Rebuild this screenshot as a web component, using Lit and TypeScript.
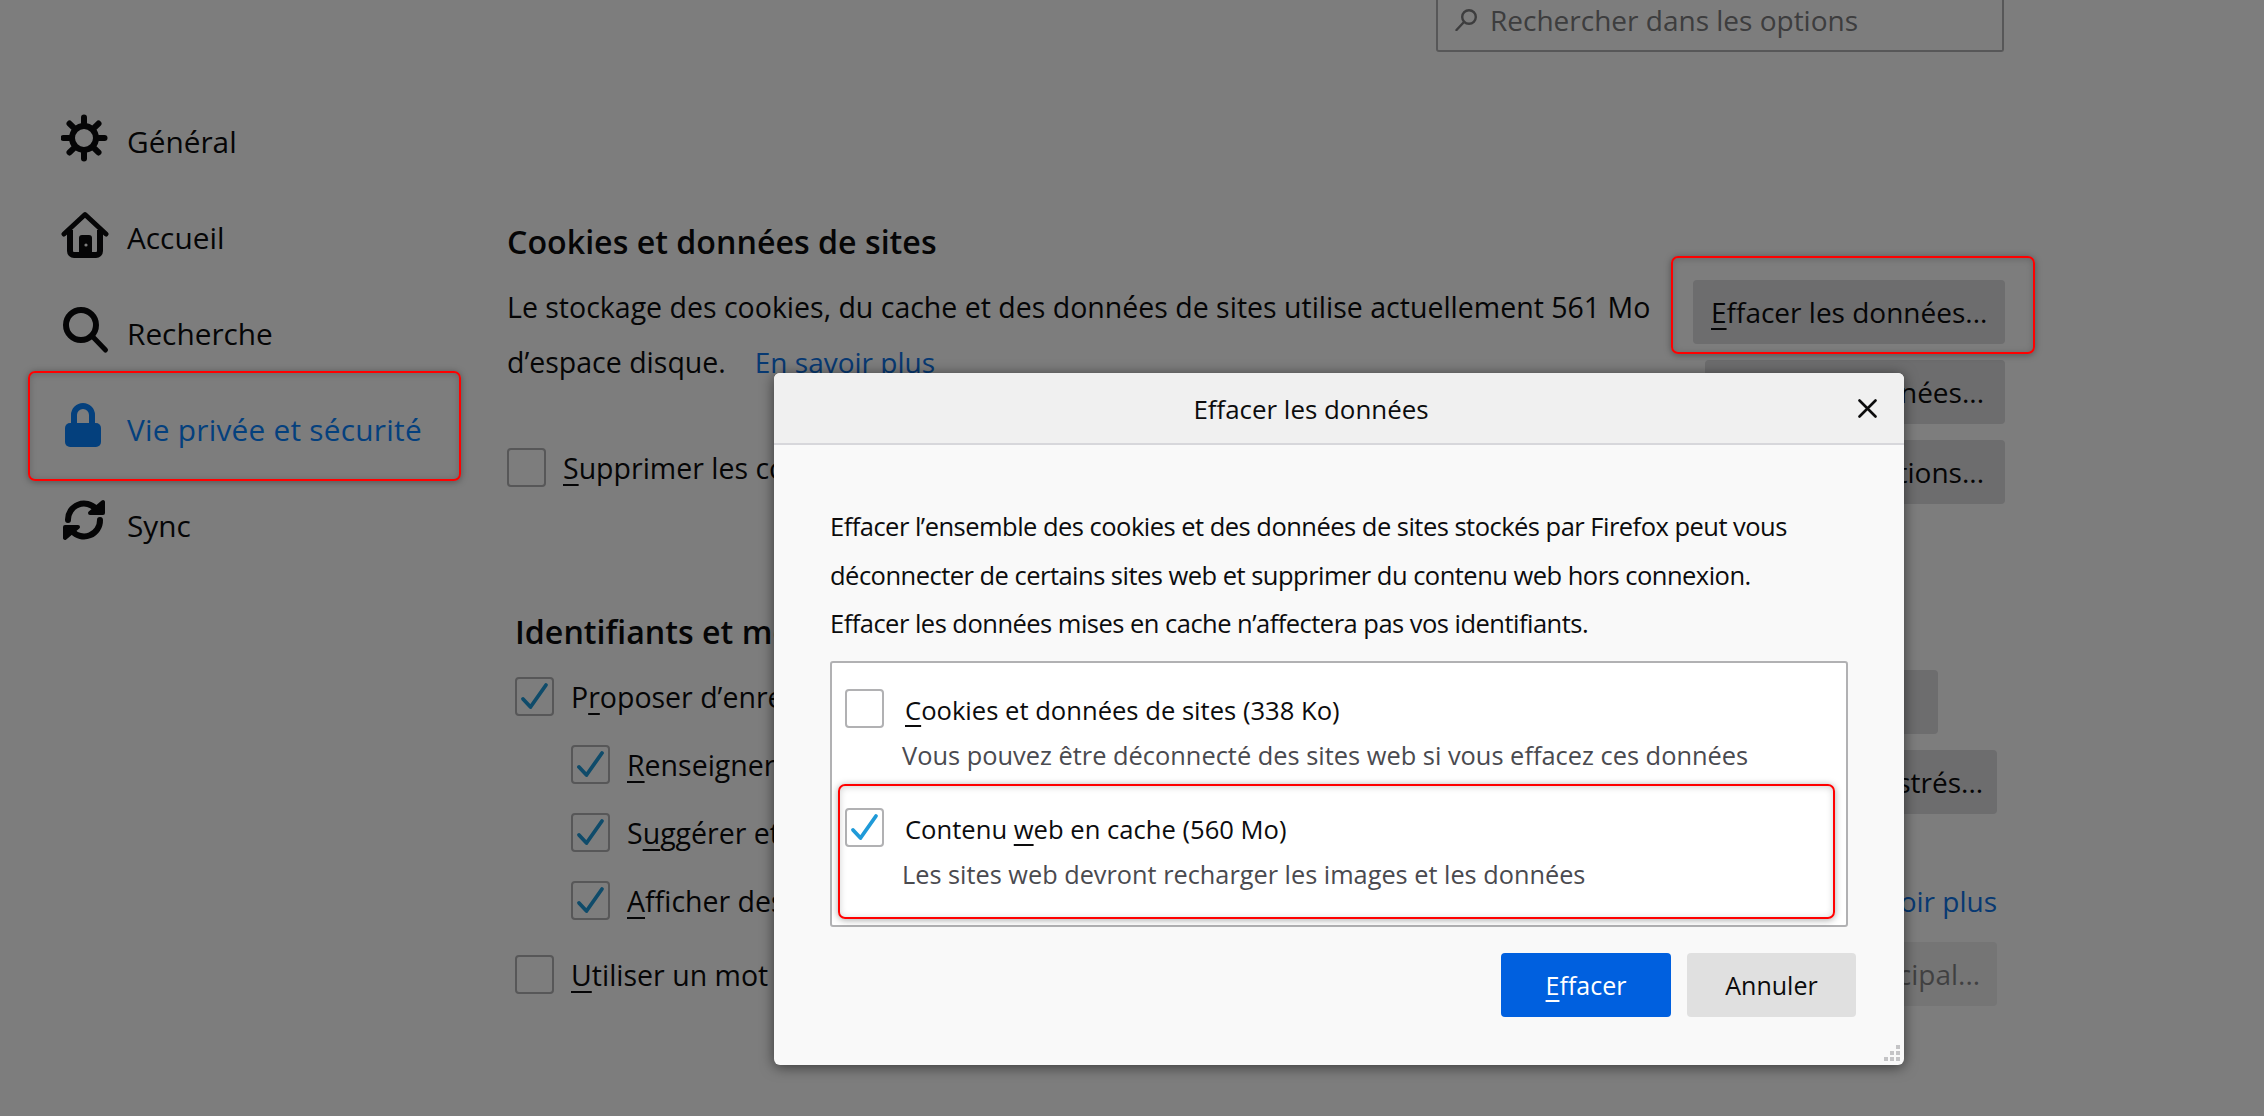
import { LitElement, html, css, svg } from "lit";
import { customElement } from "lit/decorators.js";

const gearSpokes = [0, 45, 90, 135, 180, 225, 270, 315];
const icons = {
  gear: svg`<circle cx="23" cy="24" r="12" fill="none" stroke="currentColor" stroke-width="6"/>
    ${gearSpokes.map((a) => svg`<line x1="23" y1="9" x2="23" y2="3.5" transform="rotate(${a} 23 24)" stroke="currentColor" stroke-width="6" stroke-linecap="round"/>`)}`,
  home: svg`<path d="M3 24 L24 4.5 L45 24" fill="none" stroke="currentColor" stroke-width="5" stroke-linecap="round" stroke-linejoin="round"/>
    <path d="M9 20 V41 a4 4 0 0 0 4 4 H35 a4 4 0 0 0 4-4 V20" fill="none" stroke="currentColor" stroke-width="6"/>
    <path d="M18 46 V28 a3 3 0 0 1 3-3 h7 a3 3 0 0 1 3 3 V46 z" fill="currentColor"/>
    <circle cx="25" cy="35" r="1.6" fill="#fff"/>`,
  search: svg`<circle cx="20" cy="19" r="15" fill="none" stroke="currentColor" stroke-width="6"/>
    <line x1="32" y1="31" x2="44.5" y2="44" stroke="currentColor" stroke-width="5" stroke-linecap="round"/>`,
  lock: svg`<rect x="4" y="21" width="36" height="24" rx="5" fill="currentColor"/>
    <path d="M13 24 V13 a9 9 0 0 1 18 0 V24" fill="none" stroke="currentColor" stroke-width="6"/>`,
  sync: svg`<path d="M7 22 A16 16 0 0 1 35 11" fill="none" stroke="currentColor" stroke-width="6" stroke-linecap="round"/>
    <path d="M42 4 V15 H29 z" fill="currentColor" stroke="currentColor" stroke-width="4" stroke-linejoin="round"/>
    <path d="M39 22 A16 16 0 0 1 11 33" fill="none" stroke="currentColor" stroke-width="6" stroke-linecap="round"/>
    <path d="M4 40 V29 H17 z" fill="currentColor" stroke="currentColor" stroke-width="4" stroke-linejoin="round"/>`,
};

const navItems = [
  { icon: icons.gear, label: "Général" },
  { icon: icons.home, label: "Accueil" },
  { icon: icons.search, label: "Recherche" },
  { icon: icons.lock, label: "Vie privée et sécurité", active: true },
  { icon: icons.sync, label: "Sync" },
];

const box = (checked: boolean) => html`<div class="cb">
  ${checked
    ? html`<svg viewBox="0 0 39 39" width="39" height="39"><path d="M8 22 L15.5 30 L31 8" fill="none" stroke="currentColor" stroke-width="3.8" stroke-linecap="round" stroke-linejoin="round"/></svg>`
    : ""}
</div>`;

@customElement("app-root")
export class AppRoot extends LitElement {
  static styles = css`
    :host {
      display: block;
      position: relative;
      width: 2264px;
      height: 1116px;
      overflow: hidden;
      background: #fff;
      color: #0c0c0d;
      font-family: "Open Sans", "Noto Sans", sans-serif;
      font-size: 28.5px;
    }
    * { box-sizing: border-box; }
    u {
      text-decoration-thickness: 2px;
      text-underline-offset: 5px;
      text-decoration-skip-ink: none;
    }

    .top { display: flex; justify-content: flex-end; padding-right: 260px; }
    .search {
      display: flex;
      align-items: flex-start;
      gap: 13px;
      width: 568px;
      height: 52px;
      padding-left: 17px;
      border: 2px solid #b1b1b3;
      border-top: none;
      border-radius: 0 0 3px 3px;
      color: #7c7c7e;
      font-size: 28px;
      line-height: 40px;
      white-space: nowrap;
    }
    .search svg { margin-top: 9px; flex: none; }

    .columns { display: flex; }

    nav { width: 507px; padding: 40px 0 0 61px; flex: none; }
    .nav-row { display: flex; height: 96px; white-space: nowrap; font-size: 29.8px; }
    .nav-row svg { flex: none; margin: 22px 16px 0 0; }
    .nav-row span { line-height: 96px; padding-top: 2px; }
    .nav-row.active { color: #0a84ff; letter-spacing: 0.25px; }

    main { width: 1498px; padding-top: 168px; flex: none; }
    section { display: flex; justify-content: space-between; white-space: nowrap; }
    .s2 { margin: 106px 8px 0 8px; }
    .col-right { display: flex; flex-direction: column; align-items: flex-end; gap: 16px; padding-top: 60px; }

    h2 { margin: 0; font-size: 32.2px; line-height: 44px; font-weight: 600; }
    p { margin: 15.5px 0 0; line-height: 55px; }
    .link { color: #0f75e8; font-size: 28px; }
    .gap-link { margin-left: 29px; }

    .check { display: flex; gap: 17px; line-height: 39px; height: 39px; }
    .check span { padding-top: 1px; }
    .s1-check { margin-top: 58px; }
    .s2-list { display: flex; flex-direction: column; gap: 29px; margin-top: 23px; }
    .indent { margin-left: 56px; }
    .s2-last { margin-top: 6px; }
    .cb {
      display: flex;
      align-items: center;
      justify-content: center;
      flex: none;
      width: 39px;
      height: 39px;
      border: 2px solid #b1b1b3;
      border-radius: 4px;
      color: #1f9ad8;
    }
    .cb svg { flex: none; }

    .btn {
      height: 64px;
      padding: 0 18px;
      border-radius: 4px;
      background: #dedee0;
      font-size: 28px;
      line-height: 64px;
      text-align: right;
    }
    .w300 { width: 300px; padding-right: 21px; }
    .w312 { width: 312px; }
    .w140 { width: 140px; }
    .w170 { width: 170px; }
    .exc { width: 80px; margin-right: 59px; }
    .disabled { opacity: 0.5; }
    .side-link { line-height: 40px; margin-top: 51px; margin-bottom: 5px; }

    .overlay { position: absolute; inset: 0; background: rgba(0, 0, 0, 0.51); }

    .dialog {
      position: absolute;
      left: 774px;
      top: 373px;
      width: 1130px;
      height: 692px;
      display: flex;
      flex-direction: column;
      border-radius: 6px;
      background: #f9f9f9;
      box-shadow: 0 2px 14px rgba(0, 0, 0, 0.55);
      white-space: nowrap;
    }
    .title-bar {
      display: flex;
      align-items: center;
      flex: none;
      height: 72px;
      border-bottom: 2px solid #d7d7db;
      border-radius: 6px 6px 0 0;
      background: #f0f0f0;
    }
    .title { flex: 1; padding-top: 2px; text-align: center; font-size: 25.9px; font-weight: 500; }
    .close { flex: none; width: 56px; padding-left: 10px; display: flex; }
    .content { padding: 57px 56px 0; }
    .intro { margin: 0 0 13.5px; font-size: 25.5px; letter-spacing: -0.52px; line-height: 48.5px; }
    .list {
      display: flex;
      flex-direction: column;
      gap: 35px;
      height: 266px;
      padding: 26px 0 0 13px;
      border: 2px solid #b1b1b3;
      border-radius: 3px;
      background: #fff;
    }
    .item-head { display: flex; gap: 21px; height: 41px; font-size: 25.6px; line-height: 39px; }
    .item-head span { padding-top: 2px; }
    .item-sub { margin: 7px 0 0 57px; font-size: 25.4px; line-height: 36px; color: #4a4a4f; }
    .item-sub.tight { font-size: 25.3px; }
    .footer { display: flex; justify-content: flex-end; gap: 16px; margin: 26px -8px 0 0; }
    .dbtn {
      width: 170px;
      height: 64px;
      border-radius: 4px;
      background: #e0e0e0;
      font-size: 25px;
      line-height: 64px;
      text-align: center;
    }
    .secondary { width: 169px; }
    .primary { background: #0060df; color: #fff; }
    .grip { position: absolute; right: 4px; bottom: 4px; }

    .mark {
      position: absolute;
      border: 2px solid #f00;
      border-radius: 7px;
      box-shadow: 0 1px 7px rgba(0, 0, 0, 0.35), inset 0 1px 7px rgba(0, 0, 0, 0.18);
    }
    .mark-nav { left: 28px; top: 371px; width: 433px; height: 110px; }
    .mark-btn { left: 1671px; top: 256px; width: 364px; height: 98px; }
    .mark-item { left: 838px; top: 784px; width: 997px; height: 135px; }
  `;

  render() {
    return html`
      <div class="top">
        <div class="search">
          <svg viewBox="0 0 22 22" width="22" height="22">
            <circle cx="14" cy="8" r="6.8" fill="none" stroke="currentColor" stroke-width="2.4"/>
            <line x1="9" y1="13" x2="1.5" y2="21" stroke="currentColor" stroke-width="2.4" stroke-linecap="round"/>
          </svg>
          <span>Rechercher dans les options</span>
        </div>
      </div>

      <div class="columns">
        <nav>
          ${navItems.map(
            (n) => html`<div class="nav-row ${n.active ? "active" : ""}">
              <svg viewBox="0 0 50 52" width="50" height="52">${n.icon}</svg>
              <span>${n.label}</span>
            </div>`
          )}
        </nav>

        <main>
          <section>
            <div>
              <h2>Cookies et données de sites</h2>
              <p>
                Le stockage des cookies, du cache et des données de sites utilise actuellement 561 Mo<br />
                d’espace disque.<span class="link gap-link">En savoir plus</span>
              </p>
              <div class="check s1-check">${box(false)}<span><u>S</u>upprimer les co</span></div>
            </div>
            <div class="col-right">
              <div class="btn w312"><u>E</u>ffacer les données...</div>
              <div class="btn w300">Gérer les données...</div>
              <div class="btn w300">Exceptions...</div>
            </div>
          </section>

          <section class="s2">
            <div>
              <h2>Identifiants et mo</h2>
              <div class="s2-list">
                <div class="check">${box(true)}<span>P<u>r</u>oposer d’enregi</span></div>
                <div class="check indent">${box(true)}<span><u>R</u>enseigner auto</span></div>
                <div class="check indent">${box(true)}<span>S<u>u</u>ggérer et gén</span></div>
                <div class="check indent">${box(true)}<span><u>A</u>fficher des ale</span></div>
                <div class="check s2-last">${box(false)}<span><u>U</u>tiliser un mot de</span></div>
              </div>
            </div>
            <div class="col-right">
              <div class="btn exc"></div>
              <div class="btn w140">gistrés...</div>
              <div class="link side-link">En savoir plus</div>
              <div class="btn w170 disabled">principal...</div>
            </div>
          </section>
        </main>
      </div>

      <div class="overlay"></div>

      <div class="dialog">
        <div class="title-bar">
          <div class="title">Effacer les données</div>
          <div class="close">
            <svg viewBox="0 0 19 19" width="19" height="19">
              <path d="M1.5 1.5 L17.5 17.5 M17.5 1.5 L1.5 17.5" fill="none" stroke="#0c0c0d" stroke-width="2.6" stroke-linecap="round"/>
            </svg>
          </div>
        </div>
        <div class="content">
          <p class="intro">
            Effacer l’ensemble des cookies et des données de sites stockés par Firefox peut vous<br />
            déconnecter de certains sites web et supprimer du contenu web hors connexion.<br />
            Effacer les données mises en cache n’affectera pas vos identifiants.
          </p>
          <div class="list">
            <div>
              <div class="item-head">${box(false)}<span><u>C</u>ookies et données de sites (338 Ko)</span></div>
              <div class="item-sub">Vous pouvez être déconnecté des sites web si vous effacez ces données</div>
            </div>
            <div>
              <div class="item-head">${box(true)}<span>Contenu <u>w</u>eb en cache (560 Mo)</span></div>
              <div class="item-sub tight">Les sites web devront recharger les images et les données</div>
            </div>
          </div>
          <div class="footer">
            <div class="dbtn primary"><u>E</u>ffacer</div>
            <div class="dbtn secondary">Annuler</div>
          </div>
        </div>
        <svg class="grip" viewBox="0 0 16 16" width="16" height="16" fill="#c4c4c6">
          <rect x="12" y="0" width="4" height="4"/>
          <rect x="6" y="6" width="4" height="4"/><rect x="12" y="6" width="4" height="4"/>
          <rect x="0" y="12" width="4" height="4"/><rect x="6" y="12" width="4" height="4"/><rect x="12" y="12" width="4" height="4"/>
        </svg>
      </div>

      <div class="mark mark-nav"></div>
      <div class="mark mark-btn"></div>
      <div class="mark mark-item"></div>
    `;
  }
}
